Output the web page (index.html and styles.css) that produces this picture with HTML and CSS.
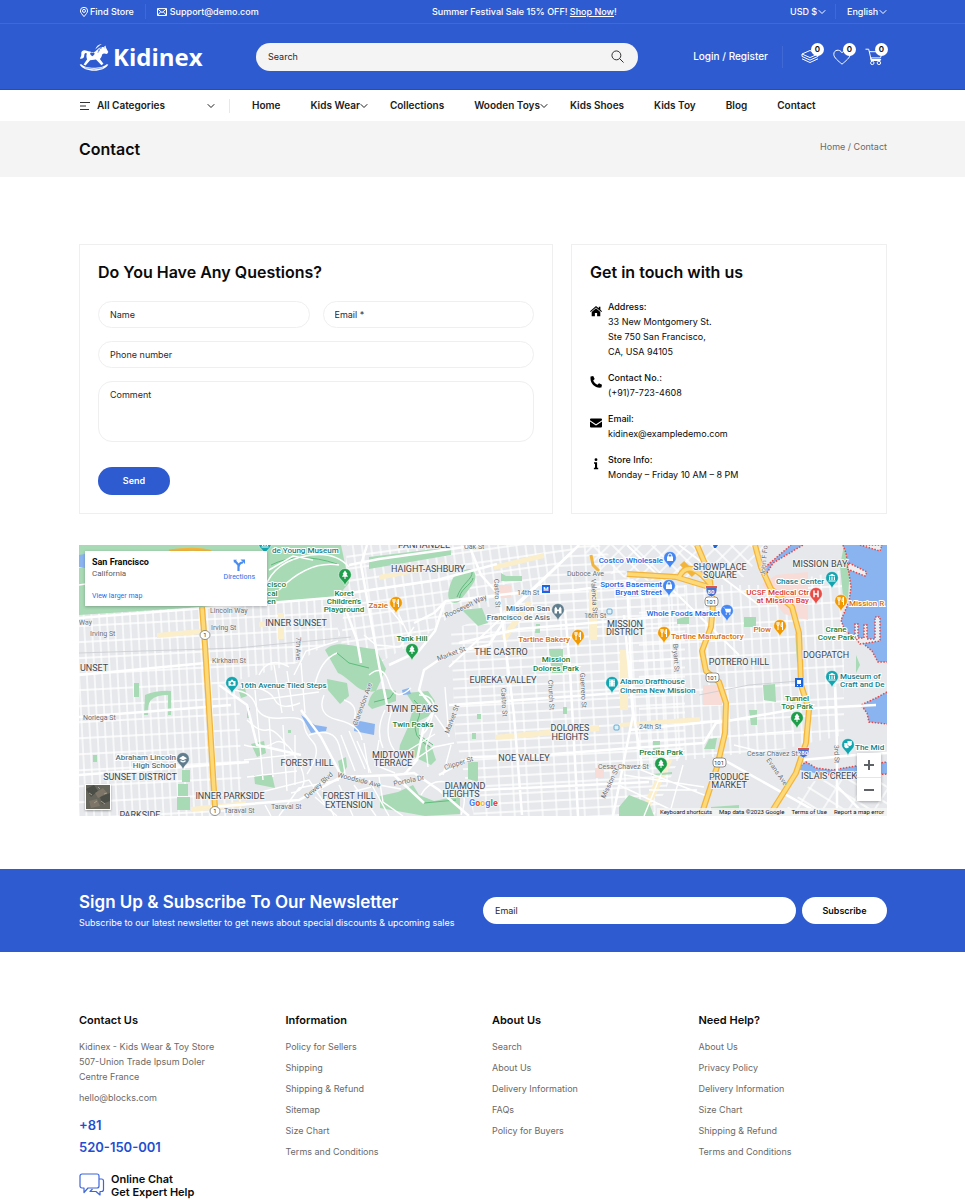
FILE: index.html
```html
<!DOCTYPE html>
<html lang="en">
<head>
<meta charset="utf-8">
<meta name="viewport" content="width=device-width, initial-scale=1">
<title>Contact – Kidinex</title>
<link rel="stylesheet" href="styles.css">
</head>
<body>
<svg class="sprite" aria-hidden="true">
  <symbol id="chevron" viewBox="0 0 8 8"><path d="M1 2.5 4 5.5 7 2.5" fill="none" stroke="currentColor" stroke-linecap="round" stroke-linejoin="round"/></symbol>
</svg>

<div class="topbar">
  <div class="wrap topbar-row">
    <div class="topbar-side">
      <a href="#" class="icon-link"><svg class="icon-s" viewBox="0 0 10 10"><path d="M5 9.6C3.2 7.4 1.4 5.6 1.4 3.9a3.6 3.6 0 0 1 7.2 0C8.6 5.6 6.8 7.4 5 9.6Z"/><circle cx="5" cy="3.9" r="1.5"/></svg>Find Store</a>
      <a href="#" class="icon-link with-rule"><svg class="icon-s" viewBox="0 0 10 10"><path d="M.5 1.6h9v6.9h-9zM.5 1.8 5 5.6l4.5-3.8M.6 8.3l3.2-3.6M9.4 8.3 6.2 4.7"/></svg>Support@demo.com</a>
    </div>
    <p class="promo">Summer Festival Sale 15% OFF! <a href="#">Shop Now</a>!</p>
    <div class="topbar-side topbar-end">
      <span class="picker"><select aria-label="Currency"><option>USD $</option></select><svg class="chev"><use href="#chevron"/></svg></span>
      <span class="picker with-rule"><select aria-label="Language"><option>English</option></select><svg class="chev"><use href="#chevron"/></svg></span>
    </div>
  </div>
</div>

<header class="header">
  <div class="wrap header-row">
    <a href="#" class="logo">
      <svg class="logo-horse" viewBox="0 0 90 86" aria-hidden="true">
        <g fill="#fff">
          <path d="M23 24C14 19 4 25 6 34c1 6-3 9-4 14 7 1 13-2 13-9 0-4 1-7 5-8l3 1c-3 9 0 15 1 18L13 66l6 3 14-16 18-2 17 17 6-4-11-15c4-4 6-9 7-14 2-2 4-3 6-3l9 2 4-6-6-11-3-9-5 5C62 10 55 22 49 26c-7 5-17 0-26-2Z"/>
          <path d="M69 3C60 4 52 9 49 20c5-5 10-10 20-17Z"/>
          <path d="M1 66c14 25 74 26 88 0l-5-1c-14 14-64 15-78 0Z"/>
        </g>
        <path d="M17 76q28 9 56 0" fill="none" stroke="#2e5bd0" stroke-width="1.500"/>
        <path d="M40 41c-10-7-7-12-3-12 2 0 3 2 3 2s1-2 3-2c4 0 7 5-3 12Z" fill="#2e5bd0"/>
        <path d="M72 10c-7 4-13 11-15 20M62 14l6 3M57 21l6 3M78 14v2" fill="none" stroke="#2e5bd0" stroke-width="2"/>
      </svg>
      <span>Kidinex</span>
    </a>
    <form class="search">
      <input type="search" placeholder="Search" aria-label="Search">
      <button type="button" aria-label="Submit search"><svg viewBox="0 0 14 14"><circle cx="5.8" cy="5.8" r="4.8"/><path d="m9.3 9.3 4.2 4.2"/></svg></button>
    </form>
    <a href="#" class="login">Login / Register</a>
    <div class="actions">
      <a href="#" aria-label="Compare"><svg viewBox="0 0 18 18"><path d="M9 2.5 17 6 9 9.6 1 6ZM1 8.4l8 3.7 8-3.7M1 10.8l8 3.7 8-3.7M1 8.4V6m16 2.4V6"/></svg><span class="badge">0</span></a>
      <a href="#" aria-label="Wishlist"><svg viewBox="0 0 18 18"><path d="M9 16.2C5.400 13 .8 9.700.8 6.300.8 1.500 6.800.8 9 4.800c2.200-4 8.200-3.300 8.200 1.500C17.200 9.700 12.600 13 9 16.200Z"/></svg><span class="badge">0</span></a>
      <a href="#" aria-label="Cart"><svg viewBox="0 0 18 18"><path d="M.5 1.200h3.200l2.400 10.300M4.300 3.700h13l-1.800 6.200H5.700M6.100 11.500h10M6 9.900v2.600h9.500"/><circle cx="7.300" cy="14.900" r="1.700"/><circle cx="13.900" cy="14.900" r="1.700"/></svg><span class="badge">0</span></a>
    </div>
  </div>
</header>

<nav class="nav">
  <div class="wrap nav-row">
    <button type="button" class="categories"><svg class="menu-icon" viewBox="0 0 12 10"><path d="M1 1.500h10M1 5h6M1 8.500h9"/></svg>All Categories<svg class="chev chev-end"><use href="#chevron"/></svg></button>
    <ul class="menu">
      <li><a href="#">Home</a></li>
      <li><a href="#">Kids Wear<svg class="chev"><use href="#chevron"/></svg></a></li>
      <li><a href="#">Collections</a></li>
      <li><a href="#">Wooden Toys<svg class="chev"><use href="#chevron"/></svg></a></li>
      <li><a href="#">Kids Shoes</a></li>
      <li><a href="#">Kids Toy</a></li>
      <li><a href="#">Blog</a></li>
      <li><a href="#">Contact</a></li>
    </ul>
  </div>
</nav>

<div class="banner">
  <div class="wrap banner-row">
    <h1>Contact</h1>
    <p class="crumbs"><a href="#">Home</a> / Contact</p>
  </div>
</div>

<main class="wrap">
  <div class="cards">
    <section class="card">
      <h2>Do You Have Any Questions?</h2>
      <form class="contact-form">
        <input type="text" placeholder="Name" aria-label="Name">
        <input type="email" placeholder="Email *" aria-label="Email">
        <input type="tel" class="full" placeholder="Phone number" aria-label="Phone number">
        <textarea class="full" placeholder="Comment" aria-label="Comment"></textarea>
        <button type="button" class="send">Send</button>
      </form>
    </section>
    <section class="card">
      <h2>Get in touch with us</h2>
      <ul class="details">
        <li><svg viewBox="0 0 12 12"><path d="M6 .9 0 6.200l.7.8L6 2.400 11.300 7l.7-.8-1.600-1.400V1.700H8.800v1.600Z"/><path d="M6 3.300 1.700 7v4.200h3.200V8h2.200v3.200h3.200V7Z"/></svg><div><b>Address:</b><br>33 New Montgomery St.<br>Ste 750 San Francisco,<br>CA, USA 94105</div></li>
        <li><svg viewBox="0 0 12 12"><path d="M.6.6 3.200 0l1.500 3L3.200 4.500c.7 1.900 2.300 3.500 4.300 4.300L9 7.300l3 1.400-.6 2.800C5 12.600-.4 7 .6.600Z"/></svg><div><b>Contact No.:</b><br>(+91)7-723-4608</div></li>
        <li><svg viewBox="0 0 12 12"><path d="M1 1.500h10a1 1 0 0 1 1 1v.7L6 7.300 0 3.200v-.7a1 1 0 0 1 1-1Z"/><path d="M0 4.500v5a1 1 0 0 0 1 1h10a1 1 0 0 0 1-1v-5L6.500 8.300a1 1 0 0 1-1 0Z"/></svg><div><b>Email:</b><br>kidinex@exampledemo.com</div></li>
        <li><svg viewBox="0 0 12 12"><circle cx="6" cy="1.700" r="1.400"/><path d="M4 4.200h3.100v5.500H8.200v1.500H3.900V9.700H5V5.700H4Z"/></svg><div><b>Store Info:</b><br>Monday – Friday 10 AM – 8 PM</div></li>
      </ul>
    </section>
  </div>

  <section class="map" aria-label="Map of San Francisco">
    <svg class="map-art" viewBox="0 0 808 271">
      <defs>
        <pattern id="g-west" width="7.700" height="16" patternUnits="userSpaceOnUse" patternTransform="rotate(-3)"><path d="M1 0v16M0 1h8" class="st"/></pattern>
        <pattern id="g-north" width="9" height="12" patternUnits="userSpaceOnUse" patternTransform="rotate(-8)"><path d="M1 0v12M0 1h9" class="st"/></pattern>
        <pattern id="g-mid" width="14" height="9" patternUnits="userSpaceOnUse" patternTransform="rotate(-3)"><path d="M1 0v9M0 1h14" class="st"/></pattern>
        <pattern id="g-east" width="9" height="16" patternUnits="userSpaceOnUse" patternTransform="rotate(-3)"><path d="M1 0v16M0 1h9" class="st"/></pattern>
        <pattern id="g-diag" width="11" height="14" patternUnits="userSpaceOnUse" patternTransform="rotate(45)"><path d="M1 0v14M0 1h11" class="st"/></pattern>
        <pattern id="g-se" width="22" height="14" patternUnits="userSpaceOnUse" patternTransform="rotate(32)"><path d="M1 0v14M0 1h22" class="st"/></pattern>
        <symbol id="pin" viewBox="0 0 14 19"><path d="M7 .5a6.300 6.300 0 0 1 6.300 6.300c0 4.700-5 5.500-6.300 11.200C5.700 12.300.7 11.500.7 6.800A6.300 6.300 0 0 1 7 .5Z" stroke="#fff" stroke-width=".5"/></symbol>
        <symbol id="food" viewBox="0 0 14 19"><use href="#pin" fill="#f29900"/><path d="M4 3v2.500q0 1 1 1t1-1V3M5 3v8M9.500 11V3q-1.700 1-1.500 4.500h1.500" fill="none" stroke="#fff"/></symbol>
        <symbol id="tree" viewBox="0 0 14 19"><use href="#pin" fill="#1e9e4a"/><path d="M7 2.500 4.500 6h1L4 8.700h2.500V11h1V8.700H10L8.500 6h1Z" fill="#fff"/></symbol>
        <symbol id="shop" viewBox="0 0 14 19"><use href="#pin" fill="#4285f4"/><path d="M4 5.500h6V10H4Z" fill="#fff"/><path d="M5.300 6V4.500a1.700 1.700 0 0 1 3.400 0V6" fill="none" stroke="#fff"/></symbol>
        <symbol id="cart" viewBox="0 0 14 19"><use href="#pin" fill="#4285f4"/><path d="M3 3.500h1.500L6 8.500h4.500L11 4.800H5Z" fill="#fff"/><circle cx="6.300" cy="10" r=".8" fill="#fff"/><circle cx="9.700" cy="10" r=".8" fill="#fff"/></symbol>
        <symbol id="camera" viewBox="0 0 14 19"><use href="#pin" fill="#12a4af"/><path d="M3.500 5h2l.7-1.300h1.600L8.500 5h2v4.800h-7Z" fill="#fff"/><circle cx="7" cy="7.300" r="1.400" fill="#12a4af"/></symbol>
        <symbol id="museum" viewBox="0 0 14 19"><use href="#pin" fill="#12a4af"/><path d="m7 2.800 3.700 2.200H3.300ZM4 5.600h1.200v3.400H4Zm2.400 0h1.200v3.400H6.400Zm2.400 0H10v3.400H8.800ZM3.500 9.500h7v1h-7Z" fill="#fff"/></symbol>
        <symbol id="film" viewBox="0 0 14 19"><use href="#pin" fill="#12a4af"/><path d="M4 3.500h6v7H4Z" fill="#fff"/><path d="M5 4v6.500M9 4v6.500" stroke="#12a4af" stroke-width=".8" stroke-dasharray="1 .8"/></symbol>
        <symbol id="masks" viewBox="0 0 14 19"><use href="#pin" fill="#12a4af"/><path d="M6.500 3h4.300v3.500q-2 3-4.300 0Z" fill="#fff"/><path d="M3.300 5h3.200v2.500q1 1.200 1.800 1.200-2.600 3.200-5 0Z" fill="#fff"/></symbol>
        <symbol id="mission" viewBox="0 0 14 19"><use href="#pin" fill="#5f7d8c"/><path d="M3.500 10.500v-5l1.300-2 1.200 2v1h2v-1l1.200-2 1.300 2v5H8V9a1 1 0 0 0-2 0v1.500Z" fill="#fff"/></symbol>
        <symbol id="school" viewBox="0 0 14 19"><use href="#pin" fill="#5f7d8c"/><path d="m3 6.200 4-2.500 4 2.500-4 2ZM4.500 8v1.700q2.500 1.500 5 0V8L7 9.200Z" fill="#fff"/></symbol>
        <symbol id="hosp" viewBox="0 0 14 19"><use href="#pin" fill="#e94b45"/><path d="M5 3.500v6.800M9 3.500v6.800M5 7h4" stroke="#fff" stroke-width="1.500"/></symbol>
      </defs>
      <rect width="808" height="271" fill="#e6e8eb"/>
      <path d="M0 50 240 44 262 90 218 118 160 135 163 271H0Z" fill="url(#g-west)"/>
      <path d="M268 0H500L440 58 378 66 345 92 300 118 262 104Z" fill="url(#g-north)"/>
      <path d="M372 85 440 60 500 0H520L560 40H606V200L575 271H395L376 190Z" fill="url(#g-mid)"/>
      <path d="M500 0H690L665 32 560 36 520 26Z" fill="url(#g-diag)"/>
      <path d="M560 40H690L765 25V190L700 205 560 220Z" fill="url(#g-east)"/>
      <path d="M735 236 808 232V271H700Z" fill="url(#g-se)"/>
      <!-- pale commercial strips and pink hospital blocks -->
      <g fill="#fbeecb">
        <path d="m78 88 44-4v5l-44 4ZM180 77l24-2v5l-24 2ZM199 68h6v26h-6ZM300 30l65-13v5l-65 13ZM415 20l50-12v5l-50 12ZM422 92l26-36 5 2-26 38ZM416 190l104-10v6l-104 9ZM541 105h8v60h-8ZM510 45h8v50h-8ZM541 178l80-6v5l-80 5ZM112 262l55-6v5l-55 6ZM586 216l8-2-24 50h-8Z"/>
      </g>
      <path d="M419 40h13v13h-13ZM624 140h19v20h-19ZM697 30l32-3v48l-24-6-22-30ZM516 223h9v10h-9Z" fill="#f8dcd8"/>
      <!-- parks -->
      <g fill="#a8dab5">
        <path d="M0 0H262L270 38 258 52 185 58 0 70Z"/>
        <path d="M290 12 372 2v8l-82 14ZM374 33c8-9 20-13 22-4 3 7-8 17-16 28-10 4-15-5-6-24ZM383 65l20-2 6 15-10 3ZM246 105c12-12 30-2 51-1l10 20-10 22c-18 4-24-12-38-18Z"/>
        <path d="m422 28 5 3h16v5h-21ZM470 104h14v24h-11ZM507 68h7v5h-7ZM457 79h4v9h-5ZM665 72h12v10h-12ZM598 74l12-3v8h-12ZM684 140l12-1 1 18-12-2ZM670 165h8v15h-6ZM55 138h5v14h-5ZM14 210h4v7h-4ZM103 225h8v12h-8ZM99 239h10v12h-10ZM98 252h13v13H98ZM172 199l13-3 2 12-9 4ZM175 230h18l3 13-20-4ZM168 163h3v10h-3ZM159 144l7-1 2 8-6 2ZM209 185h3v3h-3ZM398 169h4v5h-4ZM393 188h4v6h-4ZM484 162h4v7h-4ZM389 217h10v20l-10-3ZM574 196h7v9h-7ZM630 194l8-1-2 11h-11Z"/>
        <path d="M289 160c4-20 16-17 28-14v10l-24 8ZM327 148l22-2 7 10-6 15-10 5v15l13 12 4 12-5 5-25-12-9 14 3-22 8-18 6-22ZM248 134l20 4 2 13-9 8-12-14ZM259 216l8-4 1 10-6 8ZM334 240l6 10 15 6 20-4 6-10v27l-35 2-45-8v-12l18-4ZM540 262l10-12 20 8 5 13h-35ZM765 0l6 20-2 35-5-4-3-30ZM777 110l4 10-4 8ZM716 85l6 30-4 2ZM632 262l28-2v5h-28ZM573 229l20-2v2l-20 2Z"/>
        <path d="M66 150q13-5 26-4v24h-3v-20q-12 0-17 5-4 5-3 15h-4Z"/>
      </g>
      <g fill="none" stroke="#5dbd7b" stroke-width="1">
        <path d="M378 52c5-14 16-18 15-25M381 56c-3-11 12-16 13-23M335 155q10 8 3 22t13 25M340 190l14 10M295 157l16-4 4-6M345 258l32-3M192 20q28-14 66-1M258 108l12 10 20 5"/>
      </g>
      <g fill="none" stroke="#fff" stroke-width="1.500">
        <path d="M184 50q6-30 38-38t48 10M190 25l24-14 20 4M200 45q30-30 60-25M0 40q40-8 80 4t100-4M0 22l60-8 100 14"/>
      </g>
      <!-- lakes and bay -->
      <g fill="#8ab4f0">
        <path d="m222 170 14 10 12 2-1 4-15 2ZM276 175l20 4-1 11-20-4ZM323 145l7-2 2 6-8 1ZM0 10l6-1v14l-6-1Z"/>
        <path d="M764 0H808V117H799L793 106 780 95 766 86 762 75 770 57 772 42 767 8ZM808 147 797 153 782 160 788 168 790 177 808 179ZM717 224 727 217 737 223 753 225 777 221 808 217V229L777 231 740 229ZM684 24 712 0h12l-30 18-6 10Z"/>
      </g>
      <g fill="#eceef0" stroke="#e54848" stroke-width="1.500" stroke-dasharray="1.500 1.500">
        <path d="M764 0 767 8 772 42 770 57 762 75 766 86 780 95 793 106 799 117H808M808 147 797 153 782 160 788 168 790 177 808 179M717 224 727 217 737 223 753 225 777 221 808 217M740 229l37 2 31-2M684 24 712 0M688 28l6-10 30-18" fill="none"/>
        <path d="m770 18 18 9-2 4-18-7ZM781 0l20 6 2-6ZM776 92V79h3v14h6V80h3v14h8V72h5v24l-20 3Z"/>
      </g>
      <!-- ordinary main roads -->
      <g fill="none" stroke="#fff" stroke-width="2.500" stroke-linejoin="round">
        <path d="M0 73 190 58 262 52 278 95 282 118M0 172 152 160M0 130 158 115M0 230 170 217M132 262 220 255 262 232 315 230 335 228 360 245 390 271M270 20 300 14 400 0M288 0l-6 20 18 100 8 40M258 50l100-15 60-16M390 0l12 30 18 20 15 120 8 100M335 78l20-10 12-12 70-8 60-3 60-8M366 56l-10 30-16 20-30 14M500 0 430 68 410 100 370 108 345 125 340 145 356 165 345 180 338 215 325 230M380 98l60-14 95-8 74-7M486 65l5 60 8 146M548 35l6 130 9 56M545 70l9 100-20 101M360 230l32-18 70-2 78-6 85-6 12-20 80-14 80-4M550 185l90-9M345 258l-30-28M140 140l28 20 10 40 44 10M222 165l20 27 20 38M645 215l100 56M722 215l55-5 31-2M756 142l2 60 0 69M757 240l30 31M370 160l170-12M400 245l170-8"/>
        <path d="m500 0-130 122M548 0l112 110M600 0l80 60" stroke-width="2"/>
      </g>
      <!-- hillside lanes -->
      <g fill="none" stroke="#fff" stroke-width="1.400">
        <path d="M155 145q18 2 22 16t26 12 22 6 9 18-6 32M166 140q25 4 30 15t25 3M168 175q12 12 20 10t20 16M165 200q18 5 30-2t25 20-8 30M170 250l60-15 20 30M200 271l20-28 40-8M230 190q25-8 30 10t6 30M245 150q-8 20 14 25t24 20M236 140q5-25 22-32M215 130l12-24 32-10M180 130q10-20 30-8M265 155q15 5 10 20M300 195l-4 25 20 8M306 165q-10 20-2 38M315 160q-12 28 0 45l16 12M285 198l5 30M290 130q14-12 20 8t22 5M340 150q18 0 14 18t-12 22M355 178l-8 24 2 20M300 232l4 25 20 14M290 235l20 36M325 222l30-20 20-4M342 250q10-18 30-12t10 32M275 240l22 31M260 240l14 31M243 245l12 26M372 200l-8 30M285 90l12 10 24 2 14-20M320 70l12 25M308 60l16 20"/>
        <path d="M176 145l8 90M190 172l4 60M204 180l4 66M216 190v50M195 120l8 48M208 126l6 40M222 118l4 50M165 215l55-6M168 232l50-6M180 155l60-8M262 190l14 36M270 186l16 38M278 196l14 32M330 205l26-16M356 170l14 20M366 142l4 50M300 240l22 4M262 250l30-8M236 252l22 19M186 260l6 11M540 240l65 31M545 230l80 12M555 222l75 30M570 245l48 0M585 222l-20 49M604 220l-14 51M655 200l40 10M665 190l50-4"/>
      </g>
      <path d="M0 108 158 103 272 92M620 150l50-10 50-4" fill="none" stroke="#c9ccd1" stroke-width=".8"/>
      <!-- highways -->
      <g fill="none" stroke-linejoin="round">
        <path d="M123 62 126 100 136 262M618 0 630 28 634 60 632 82 623 106 627 126 640 137 647 158 646 188 638 222 622 271M548 29 597 32 630 42M600 32Q610 12 632 40M603 18 615 30M676 0 682 22 692 44 713 62 720 88 722 140 730 165 727 198 717 228 690 271" stroke="#f3b43c" stroke-width="6"/>
        <path d="M123 62 126 100 136 262M618 0 630 28 634 60 632 82 623 106 627 126 640 137 647 158 646 188 638 222 622 271M548 29 597 32 630 42M600 32Q610 12 632 40M676 0 682 22 692 44 713 62 720 88 722 140 730 165 727 198 717 228 690 271" stroke="#fdd978" stroke-width="3.500"/>
        <path d="M90 6q30-4 42 1M512 10l2 10 6 6" stroke="#f3b43c" stroke-width="3"/>
      </g>
      <!-- shields and transit -->
      <g class="shield">
        <ellipse cx="126" cy="90" rx="5" ry="4.500"/><ellipse cx="136" cy="266" rx="5" ry="4.500"/>
        <rect x="626" y="52" width="13" height="9" rx="3"/><rect x="627" y="128" width="13" height="9" rx="3"/><rect x="634" y="213" width="13" height="9" rx="3"/>
        <text x="126" y="92">1</text><text x="136" y="268">1</text><text x="632" y="59">101</text><text x="633" y="135">101</text><text x="640" y="220">101</text>
      </g>
      <path d="M627 41h11v4q0 5-5.500 7-5.500-2-5.500-7ZM719 203h11v4q0 4-5.500 6-5.500-2-5.500-6Z" fill="#3f6fd0" stroke="#fff" stroke-width=".7"/>
      <path d="M627 41h11v2h-11ZM719 203h11v2h-11Z" fill="#d9534f"/>
      <path d="M463 40h8v8h-8ZM716 133h8v9h-8ZM634 0h5l-2 3h-2Z" fill="#1a66e0"/>
      <text x="632" y="49" class="tiny-white">80</text><text x="724" y="210" class="tiny-white">280</text>
      <text x="467" y="46" class="tiny-white">M</text>
      <path d="M718 135h4v4h-4ZM718 140h1v1h-1ZM721 140h1v1h-1Z" fill="#fff"/>
      <g fill="#dff1fb" stroke="#2b93c9" stroke-width=".7"><rect x="528" y="64" width="5" height="5" rx="1"/><rect x="535" y="180" width="5" height="5" rx="1"/></g>
      <!-- street names -->
      <g class="street">
        <text x="0" y="80" transform="rotate(-3 0 80)">Way</text>
        <text x="131" y="68">Lincoln Way</text><text x="11" y="91">Irving St</text><text x="132" y="85">Irving St</text><text x="133" y="118">Kirkham St</text><text x="4" y="175">Noriega St</text>
        <text x="145" y="268">Taraval St</text><text x="192" y="264">Taraval St</text>
        <text x="217" y="92" transform="rotate(90 217 92)">7th Ave</text>
        <text x="385" y="4">Oak St</text><text x="415" y="34" transform="rotate(87 415 34)">Castro St</text><text x="438" y="50">14th St</text><text x="505" y="73">16th St</text><text x="488" y="31">Duboce Ave</text>
        <text x="512" y="34" transform="rotate(87 512 34)">Valencia St</text><text x="367" y="73" transform="rotate(-25 367 73)">Roosevelt Way</text><text x="359" y="116" transform="rotate(-20 359 116)">Market St</text>
        <text x="278" y="181" transform="rotate(-70 278 181)">Clarendon Ave</text><text x="370" y="189" transform="rotate(-70 370 189)">Market St</text><text x="422" y="143" transform="rotate(87 422 143)">Castro St</text><text x="469" y="135" transform="rotate(87 469 135)">Church St</text><text x="501" y="128" transform="rotate(87 501 128)">Guerrero St</text>
        <text x="366" y="225" transform="rotate(-18 366 225)">Clipper St</text><text x="315" y="241" transform="rotate(-12 315 241)">Portola Dr</text><text x="258" y="232" transform="rotate(14 258 232)">Woodside Ave</text><text x="228" y="254" transform="rotate(-42 228 254)">Dewey Blvd</text>
        <text x="560" y="184">24th St</text><text x="519" y="224">Cesar Chavez St</text><text x="668" y="211">Cesar Chavez St</text><text x="594" y="99" transform="rotate(87 594 99)">Bryant St</text><text x="526" y="254" transform="rotate(-65 526 254)">Mission St</text><text x="687" y="215" transform="rotate(55 687 215)">Evans Ave</text><text x="755" y="200" transform="rotate(88 755 200)">3rd St</text><text x="686" y="31" transform="rotate(-85 686 31)">John F Foran</text>
      </g>
      <!-- neighbourhoods -->
      <g class="area">
        <text x="345" y="3">PANHANDLE</text><text x="349" y="27">HAIGHT-ASHBURY</text><text x="217" y="81">INNER SUNSET</text><text x="15" y="126">UNSET</text>
        <text x="61" y="235">SUNSET DISTRICT</text><text x="151" y="254">INNER PARKSIDE</text><text x="61" y="273">PARKSIDE</text><text x="228" y="221">FOREST HILL</text><text x="270" y="254">FOREST HILL</text><text x="270" y="263">EXTENSION</text>
        <text x="422" y="110">THE CASTRO</text><text x="424" y="138">EUREKA VALLEY</text><text x="333" y="167">TWIN PEAKS</text><text x="314" y="213">MIDTOWN</text><text x="314" y="221">TERRACE</text><text x="386" y="244">DIAMOND</text><text x="382" y="252">HEIGHTS</text><text x="445" y="216">NOE VALLEY</text><text x="491" y="186">DOLORES</text><text x="491" y="195">HEIGHTS</text>
        <text x="546" y="82">MISSION</text><text x="546" y="90">DISTRICT</text><text x="641" y="25">SHOWPLACE</text><text x="641" y="33">SQUARE</text><text x="741" y="22">MISSION BAY</text><text x="660" y="120">POTRERO HILL</text><text x="747" y="113">DOGPATCH</text><text x="650" y="235">PRODUCE</text><text x="650" y="243">MARKET</text><text x="750" y="234">ISLAIS CREEK</text>
      </g>
      <!-- places -->
      <g class="poi green"><text x="265" y="51" text-anchor="middle">Koret</text><text x="265" y="59" text-anchor="middle">Children's</text><text x="265" y="67" text-anchor="middle">Playground</text><text x="188" y="42">cisco</text><text x="188" y="51">cal</text><text x="188" y="59">en</text><text x="333" y="96" text-anchor="middle">Tank Hill</text><text x="334" y="182" text-anchor="middle">Twin Peaks</text><text x="477" y="117" text-anchor="middle">Mission</text><text x="477" y="126" text-anchor="middle">Dolores Park</text><text x="582" y="210" text-anchor="middle">Precita Park</text><text x="718" y="156" text-anchor="middle">Tunnel</text><text x="718" y="164" text-anchor="middle">Top Park</text><text x="757" y="87" text-anchor="middle">Crane</text><text x="757" y="95" text-anchor="middle">Cove Park</text></g>
      <g class="poi teal"><text x="193" y="8">de Young Museum</text><text x="161" y="143">16th Avenue Tiled Steps</text><text x="541" y="139">Alamo Drafthouse</text><text x="541" y="148">Cinema New Mission</text><text x="745" y="39" text-anchor="end">Chase Center</text><text x="761" y="134">Museum of</text><text x="761" y="142">Craft and De</text><text x="776" y="205">The Mid</text></g>
      <g class="poi orange"><text x="309" y="63" text-anchor="end">Zazie</text><text x="491" y="97" text-anchor="end">Tartine Bakery</text><text x="592" y="94">Tartine Manufactory</text><text x="692" y="87" text-anchor="end">Plow</text><text x="770" y="61">Mission R</text></g>
      <g class="poi blue"><text x="584" y="18" text-anchor="end">Costco Wholesale</text><text x="583" y="42" text-anchor="end">Sports Basement</text><text x="583" y="50" text-anchor="end">Bryant Street</text><text x="641" y="71" text-anchor="end">Whole Foods Market</text></g>
      <g class="poi slate"><text x="471" y="66" text-anchor="end">Mission San</text><text x="471" y="75" text-anchor="end">Francisco de Asis</text><text x="97" y="215" text-anchor="end">Abraham Lincoln</text><text x="97" y="223" text-anchor="end">High School</text></g>
      <g class="poi red"><text x="730" y="50" text-anchor="end">UCSF Medical Ctr</text><text x="730" y="58" text-anchor="end">at Mission Bay</text></g>
      <use href="#tree" x="259" y="23" width="14" height="19"/><use href="#tree" x="326" y="98" width="14" height="19"/><use href="#tree" x="575" y="212" width="14" height="19"/><use href="#tree" x="711" y="166" width="14" height="19"/>
      <use href="#food" x="310" y="51" width="14" height="19"/><use href="#food" x="492" y="84" width="14" height="19"/><use href="#food" x="578" y="81" width="14" height="19"/><use href="#food" x="694" y="74" width="14" height="19"/><use href="#food" x="755" y="49" width="14" height="19"/>
      <use href="#shop" x="584" y="6" width="14" height="19"/><use href="#shop" x="583" y="34" width="14" height="19"/><use href="#cart" x="641" y="59" width="14" height="19"/>
      <use href="#camera" x="146" y="131" width="14" height="19"/><use href="#film" x="526" y="131" width="14" height="19"/><use href="#museum" x="746" y="26" width="14" height="19"/><use href="#museum" x="746" y="125" width="14" height="19"/><use href="#masks" x="762" y="193" width="14" height="19"/><use href="#museum" x="179" y="-8" width="14" height="19"/>
      <use href="#mission" x="472" y="58" width="14" height="19"/><use href="#school" x="97" y="207" width="14" height="19"/><use href="#hosp" x="730" y="42" width="14" height="19"/>
      <text x="390" y="261" class="google"><tspan fill="#4285f4">G</tspan><tspan fill="#ea4335">o</tspan><tspan fill="#fbbc05">o</tspan><tspan fill="#4285f4">g</tspan><tspan fill="#34a853">l</tspan><tspan fill="#ea4335">e</tspan></text>
    </svg>
    <div class="map-card">
      <div><strong>San Francisco</strong><span>California</span><a href="#">View larger map</a></div>
      <a href="#" class="directions"><svg viewBox="0 0 12 12"><path d="M5.500 12V6L2 2M5.500 8C6 4.500 7.500 3.500 10 3.500" fill="none" stroke="#4a8df0" stroke-width="2.200"/><path d="M7.500.5H12V5ZM.5.800H4L1 4Z" fill="#4a8df0"/></svg>Directions</a>
    </div>
    <button type="button" class="satellite" aria-label="Show satellite imagery"><svg viewBox="0 0 24 24"><rect width="24" height="24" fill="#66655c"/><path d="M0 4 8 0l4 6-7 6ZM14 12l10-4v8l-8 3Z" fill="#4b4d47"/><path d="M9 8l8-5 4 5-9 5ZM3 16l8-2 3 7-9 2Z" fill="#7d7668"/><path d="M15 16l4 3M3 8l3 2M12 2l2 2M8 18l3-2M18 9l3-1" stroke="#a39b8a"/></svg></button>
    <div class="zoom"><button type="button" aria-label="Zoom in"><svg viewBox="0 0 12 12"><path d="M1 6h10M6 1v10"/></svg></button><button type="button" aria-label="Zoom out"><svg viewBox="0 0 12 12"><path d="M1 6h10"/></svg></button></div>
    <div class="map-legal"><span>Keyboard shortcuts</span><span>Map data ©2023 Google</span><a href="#">Terms of Use</a><a href="#">Report a map error</a></div>
  </section>
</main>

<section class="newsletter">
  <div class="wrap newsletter-row">
    <div>
      <h2>Sign Up &amp; Subscribe To Our Newsletter</h2>
      <p>Subscribe to our latest newsletter to get news about special discounts &amp; upcoming sales</p>
    </div>
    <form class="subscribe">
      <input type="email" placeholder="Email" aria-label="Newsletter email">
      <button type="button">Subscribe</button>
    </form>
  </div>
</section>

<footer class="wrap footer">
  <section>
    <h3>Contact Us</h3>
    <p class="address">Kidinex - Kids Wear &amp; Toy Store<br>507-Union Trade Ipsum Doler<br>Centre France</p>
    <p class="mail"><a href="#">hello@blocks.com</a></p>
    <p class="phone"><a href="#">+81<br>520-150-001</a></p>
    <div class="chat">
      <svg viewBox="0 0 26 24"><path d="M3 1h15a2 2 0 0 1 2 2v10a2 2 0 0 1-2 2H9l-4 4.500V15H3a2 2 0 0 1-2-2V3a2 2 0 0 1 2-2Z"/><path d="M20 6h2.500a2 2 0 0 1 2 2v8.500a2 2 0 0 1-2 2H21V22l-4-3.500h-6L13.500 16"/></svg>
      <strong>Online Chat<br>Get Expert Help</strong>
    </div>
  </section>
  <section>
    <h3>Information</h3>
    <ul><li><a href="#">Policy for Sellers</a></li><li><a href="#">Shipping</a></li><li><a href="#">Shipping &amp; Refund</a></li><li><a href="#">Sitemap</a></li><li><a href="#">Size Chart</a></li><li><a href="#">Terms and Conditions</a></li></ul>
  </section>
  <section>
    <h3>About Us</h3>
    <ul><li><a href="#">Search</a></li><li><a href="#">About Us</a></li><li><a href="#">Delivery Information</a></li><li><a href="#">FAQs</a></li><li><a href="#">Policy for Buyers</a></li></ul>
  </section>
  <section>
    <h3>Need Help?</h3>
    <ul><li><a href="#">About Us</a></li><li><a href="#">Privacy Policy</a></li><li><a href="#">Delivery Information</a></li><li><a href="#">Size Chart</a></li><li><a href="#">Shipping &amp; Refund</a></li><li><a href="#">Terms and Conditions</a></li></ul>
  </section>
</footer>
</body>
</html>
```

FILE: styles.css
```css
:root { --blue: #2e5bd0; --ink: #0b0b0b; --line: #efefef; --grey: #6a6a6a; }
* { box-sizing: border-box; }
body { margin: 0; font-family: Inter, "Liberation Sans", sans-serif; font-size: 9px; line-height: 15px; color: var(--ink); background: #fff; }
a { color: inherit; text-decoration: none; }
ul { list-style: none; margin: 0; padding: 0; }
h1, h2, h3, p { margin: 0; }
input, textarea, select, button { font: inherit; color: inherit; border: 0; background: none; padding: 0; margin: 0; border-radius: 0; }
button { cursor: pointer; }
input::placeholder, textarea::placeholder { color: #2a2a2a; opacity: 1; }
.sprite { position: absolute; width: 0; height: 0; }
.wrap { padding-left: 79px; padding-right: 78px; }
.chev { width: 8px; height: 8px; flex: none; }

.topbar { background: var(--blue); color: #fff; border-bottom: 1px solid #4169d5; font-weight: 500; }
.topbar-row { display: flex; justify-content: space-between; align-items: center; height: 23px; }
.topbar-side { display: flex; align-items: center; gap: 11px; }
.topbar-end { gap: 9px; }
.icon-link { display: flex; align-items: center; }
.with-rule { border-left: 1px solid #4169d5; padding-left: 11px; }
.icon-s { width: 10px; height: 10px; margin-right: 1px; fill: none; stroke: #fff; stroke-width: 1; }
.with-rule .icon-s { margin-right: 3px; }
.promo a { text-decoration: underline; }
.picker { display: flex; align-items: center; height: 15px; }
.picker select { appearance: none; }

.header { background: var(--blue); color: #fff; border-bottom: 1px solid #1f4cc8; }
.header-row { display: flex; align-items: center; height: 65px; }
.logo { display: flex; align-items: center; gap: 4px; width: 177px; font: 700 24px/28px "Open Sans", "Noto Sans", sans-serif; }
.logo-horse { width: 30px; height: 28px; }
.search { flex: 1; display: flex; align-items: center; height: 28px; border-radius: 14px; background: #f4f4f4; padding: 0 14px 0 12px; }
.search input { flex: 1; min-width: 0; height: 28px; outline: none; color: var(--ink); }
.search svg { display: block; width: 13px; height: 13px; fill: none; stroke: #222; }
.login { margin-left: 55px; font-weight: 500; font-size: 10px; }
.actions { display: flex; gap: 14px; margin-left: 14px; padding-left: 18px; border-left: 1px solid #4169d5; height: 22px; align-items: center; padding-right: 4px; }
.actions a { position: relative; display: block; height: 18px; }
.actions svg { width: 18px; height: 18px; fill: none; stroke: #fff; stroke-width: 1; stroke-linejoin: round; }
.badge { position: absolute; left: 10px; top: -5px; width: 13px; height: 13px; border-radius: 50%; background: #fff; color: var(--ink); font-size: 8px; line-height: 13px; font-weight: 600; text-align: center; }

.nav-row { display: flex; align-items: center; height: 31px; font-size: 10px; font-weight: 600; color: #1c1c1c; }
.categories { display: flex; align-items: center; width: 151px; height: 14px; border-right: 1px solid #e8e8e8; padding-right: 14px; }
.menu-icon { width: 12px; height: 10px; margin-right: 6px; fill: none; stroke: #333; stroke-width: 1; }
.chev-end { margin-left: auto; }
.menu { display: flex; padding-left: 7px; white-space: nowrap; }
.menu a { position: relative; display: block; padding: 0 15px; }
.menu .chev { position: absolute; right: 7px; top: 4px; }

.banner { background: #f4f4f4; }
.banner-row { display: flex; justify-content: space-between; align-items: center; height: 56px; }
.banner h1 { font-size: 16px; line-height: 20px; font-weight: 600; }
.crumbs { color: var(--grey); padding-bottom: 5px; }

.cards { display: grid; grid-template-columns: 3fr 2fr; gap: 18px; margin-top: 67px; }
.card { border: 1px solid var(--line); padding: 17px 18px 18px; }
.card h2 { font-size: 16px; line-height: 20px; font-weight: 600; }
.contact-form { display: grid; grid-template-columns: 1fr 1fr; gap: 13px; margin-top: 19px; }
.contact-form input, .contact-form textarea { width: 100%; height: 27px; border: 1px solid var(--line); border-radius: 14px; padding: 0 11px 1px; outline: none; }
.contact-form textarea { height: 61px; padding-top: 5px; resize: none; display: block; }
.full { grid-column: 1 / -1; }
.send { width: 72px; height: 28px; border-radius: 14px; background: var(--blue); color: #fff; font-weight: 600; margin-top: 12px; padding-bottom: 1px; }
.details { display: grid; gap: 11px; margin-top: 17px; }
.details li { display: flex; gap: 6px; line-height: 15px; }
.details svg { width: 12px; height: 12px; margin-top: 6px; flex: none; }
.details b { font-weight: 500; }

.map { position: relative; margin-top: 31px; overflow: hidden; font-family: Roboto, "Liberation Sans", sans-serif; }
.map-art { display: block; width: 100%; }
.st { fill: none; stroke: #fff; stroke-width: 1.3; }
.street { font-size: 7px; fill: #6b6f75; stroke: #f4f5f6; stroke-width: 1px; paint-order: stroke; }
.area { font-size: 9px; fill: #42474d; text-anchor: middle; stroke: #f1f2f4; stroke-width: 2px; paint-order: stroke; }
.poi { font-size: 8px; font-weight: 500; stroke: #fff; stroke-width: 2px; paint-order: stroke; }
.green { fill: #188038; }
.teal { fill: #12808a; }
.orange { fill: #d56e0c; }
.blue { fill: #1a66e0; }
.slate { fill: #546e7a; }
.red { fill: #d93a34; }
.shield { fill: #fff; stroke: #666; stroke-width: .7; }
.shield text { font-size: 6px; fill: #333; stroke: none; text-anchor: middle; }
.tiny-white { font-size: 6px; font-weight: 700; fill: #fff; text-anchor: middle; }
.google { font-size: 9px; font-weight: 700; stroke: #fff; stroke-width: 1px; paint-order: stroke; }
.map-card { position: absolute; left: 6px; top: 6px; width: 182px; height: 55px; display: flex; justify-content: space-between; padding: 5px 12px 0 7px; background: #fff; box-shadow: 0 1px 3px rgba(0, 0, 0, .25); font-size: 8px; line-height: 12px; }
.map-card strong, .map-card span, .map-card a { display: block; }
.map-card strong { font-size: 9px; font-weight: 700; }
.map-card span { color: #5b5b5b; }
.map-card a { color: #1a73e8; font-size: 7px; margin-top: 10px; }
.map-card .directions { text-align: center; margin-top: 3px; }
.directions svg { display: block; width: 12px; height: 12px; margin: 0 auto; }
.satellite { position: absolute; left: 6px; bottom: 6px; width: 26px; height: 26px; border: 1px solid #fff; box-shadow: 0 1px 2px rgba(0, 0, 0, .35); }
.satellite svg { display: block; width: 24px; height: 24px; }
.zoom { position: absolute; right: 6px; bottom: 15px; width: 24px; background: #fff; box-shadow: 0 1px 3px rgba(0, 0, 0, .3); }
.zoom button { display: flex; width: 24px; height: 24px; align-items: center; justify-content: center; }
.zoom button + button { border-top: 1px solid #e6e6e6; }
.zoom svg { width: 12px; height: 12px; stroke: #5f6368; stroke-width: 2; }
.map-legal { position: absolute; right: 0; bottom: 0; display: flex; gap: 7px; padding: 0 3px; font-size: 6px; line-height: 8px; background: rgba(245, 245, 245, .8); color: #111; }

.newsletter { margin-top: 53px; background: var(--blue); color: #fff; }
.newsletter-row { display: grid; grid-template-columns: 1fr 1fr; align-items: center; height: 83px; }
.newsletter h2 { font-size: 17px; line-height: 24px; font-weight: 600; white-space: nowrap; }
.newsletter p { line-height: 14px; margin-top: 2px; padding-bottom: 1px; white-space: nowrap; }
.subscribe { display: flex; gap: 6px; }
.subscribe input { flex: 1; min-width: 0; height: 27px; border-radius: 14px; background: #fff; padding: 0 12px; color: var(--ink); outline: none; }
.subscribe button { width: 85px; height: 27px; border-radius: 14px; background: #fff; color: var(--ink); font-weight: 600; font-size: 9px; }

.footer { display: grid; grid-template-columns: repeat(4, 1fr); gap: 18px; padding-top: 60px; color: var(--grey); }
.footer h3 { font-size: 11px; line-height: 16px; font-weight: 600; color: var(--ink); margin-bottom: 11px; }
.footer li { line-height: 15px; margin-bottom: 6px; }
.mail { margin-top: 6px; }
.phone { color: #1f4fd0; font-size: 13px; line-height: 22px; font-weight: 600; margin-top: 9px; }
.chat { display: flex; gap: 6px; margin-top: 15px; color: var(--ink); }
.chat svg { width: 26px; height: 24px; fill: none; stroke: #3c66dc; stroke-width: 1.2; stroke-linejoin: round; }
.chat strong { font-size: 11px; line-height: 13px; font-weight: 600; }
```
